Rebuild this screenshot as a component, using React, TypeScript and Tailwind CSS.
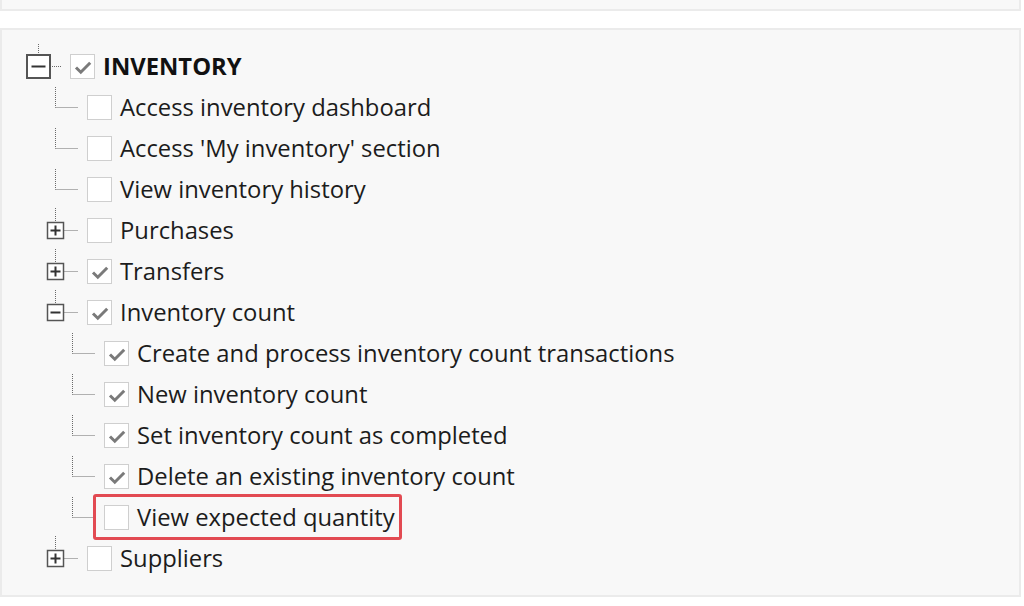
type Kind = "leaf" | "plus" | "minus";

type Row = {
  level: 0 | 1 | 2;
  label: string;
  kind: Kind;
  checked?: boolean;
  bold?: boolean;
  highlight?: boolean;
};

const rows: Row[] = [
  { level: 0, label: "INVENTORY", kind: "minus", checked: true, bold: true },
  { level: 1, label: "Access inventory dashboard", kind: "leaf" },
  { level: 1, label: "Access 'My inventory' section", kind: "leaf" },
  { level: 1, label: "View inventory history", kind: "leaf" },
  { level: 1, label: "Purchases", kind: "plus" },
  { level: 1, label: "Transfers", kind: "plus", checked: true },
  { level: 1, label: "Inventory count", kind: "minus", checked: true },
  { level: 2, label: "Create and process inventory count transactions", kind: "leaf", checked: true },
  { level: 2, label: "New inventory count", kind: "leaf", checked: true },
  { level: 2, label: "Set inventory count as completed", kind: "leaf", checked: true },
  { level: 2, label: "Delete an existing inventory count", kind: "leaf", checked: true },
  { level: 2, label: "View expected quantity", kind: "leaf", highlight: true },
  { level: 1, label: "Suppliers", kind: "plus" },
];

const indent = ["pl-0", "pl-[17px]", "pl-[34px]"];

const DOT = "#6a6a6a";

// tree lines + expander box, drawn in a 44x41 cell
function Connector({ kind, root }: { kind: Kind; root: boolean }) {
  const cx = 12.5;
  const cy = 20.5;
  if (kind === "leaf") {
    return (
      <svg width="44" height="41" className="shrink-0">
        <line x1={cx} y1="0" x2={cx} y2={cy} stroke={DOT} strokeDasharray="1 1" />
        <line x1={cx} y1={cy} x2="35" y2={cy} stroke={DOT} strokeDasharray="1 1" />
      </svg>
    );
  }
  const half = root ? 11.5 : 8;
  const top = cy - half;
  const arm = root ? 7 : 5;
  return (
    <svg width="44" height="41" className="shrink-0 overflow-visible">
      <line x1={cx} y1="-2" x2={cx} y2={top} stroke={DOT} strokeDasharray="1 1" />
      <line x1={cx + half} y1={cy} x2="35" y2={cy} stroke={DOT} strokeDasharray="1 1" />
      <rect
        x={cx - half}
        y={top}
        width={half * 2}
        height={half * 2}
        fill="#ffffff"
        stroke="#555555"
        strokeWidth={root ? 2 : 1.5}
      />
      <line x1={cx - arm} y1={cy} x2={cx + arm} y2={cy} stroke="#333333" strokeWidth="2" />
      {kind === "plus" && (
        <line x1={cx} y1={cy - arm} x2={cx} y2={cy + arm} stroke="#333333" strokeWidth="2" />
      )}
    </svg>
  );
}

function Checkbox({ checked }: { checked?: boolean }) {
  return (
    <span className="flex h-[25px] w-[25px] shrink-0 items-center justify-center border-[1.5px] border-[#cfcfcf] bg-white">
      {checked && (
        <svg width="22" height="22" viewBox="0 0 22 22">
          <path d="M4 11.5 L8.8 16.2 L18.2 6.8" fill="none" stroke="#7a7a7a" strokeWidth="3" />
        </svg>
      )}
    </span>
  );
}

function TreeRow({ row }: { row: Row }) {
  return (
    <div className={`flex h-[41px] items-center ${indent[row.level]}`}>
      <Connector kind={row.kind} root={row.level === 0} />
      <div className="relative flex items-center">
        {row.highlight && (
          <span className="absolute -top-[11px] -bottom-[10px] -left-[11px] -right-[7px] rounded-[3px] border-[3px] border-[#e24a52]" />
        )}
        <Checkbox checked={row.checked} />
        <span
          className={`ml-[8px] whitespace-nowrap text-[23.8px] leading-none ${
            row.bold ? "font-bold text-[#111111]" : "text-[#1c1c1c]"
          }`}
        >
          {row.label}
        </span>
      </div>
    </div>
  );
}

export default function App() {
  return (
    <div className="h-[606px] w-[1024px] overflow-hidden bg-white font-['Open_Sans',sans-serif]">
      <div className="h-[11px] w-[1021px] border-2 border-t-0 border-[#ebebeb] bg-[#f8f8f8]" />
      <div className="mt-[17px] h-[569px] w-[1021px] border-2 border-[#ebebeb] bg-[#f8f8f8] pl-[24px] pt-[16px]">
        {rows.map((row, i) => (
          <TreeRow key={i} row={row} />
        ))}
      </div>
    </div>
  );
}
